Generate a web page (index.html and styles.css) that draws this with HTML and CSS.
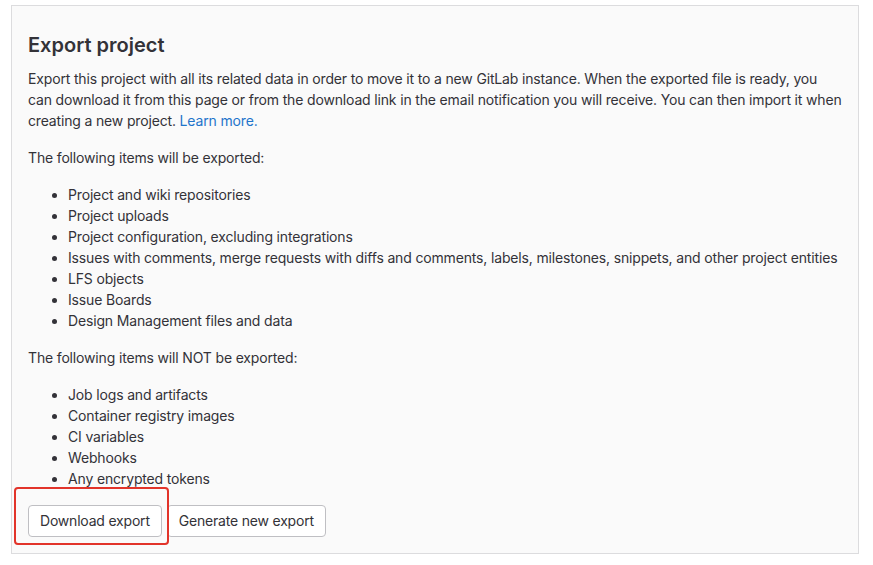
FILE: index.html
```html
<!DOCTYPE html>
<html lang="en">
<head>
<meta charset="utf-8">
<title>Export project</title>
<link rel="stylesheet" href="styles.css">
</head>
<body>
<div class="page">
  <section class="panel">
    <h4 class="title">Export project</h4>
    <p>Export this project with all its related data in order to move it to a new GitLab instance. When the exported file is ready, you can download it from this page or from the download link in the email notification you will receive. You can then import it when creating a new project. <a href="#" class="link">Learn more.</a></p>
    <p>The following items will be exported:</p>
    <ul>
      <li>Project and wiki repositories</li>
      <li>Project uploads</li>
      <li>Project configuration, excluding integrations</li>
      <li>Issues with comments, merge requests with diffs and comments, labels, milestones, snippets, and other project entities</li>
      <li>LFS objects</li>
      <li>Issue Boards</li>
      <li>Design Management files and data</li>
    </ul>
    <p>The following items will NOT be exported:</p>
    <ul>
      <li>Job logs and artifacts</li>
      <li>Container registry images</li>
      <li>CI variables</li>
      <li>Webhooks</li>
      <li>Any encrypted tokens</li>
    </ul>
    <div class="actions">
      <span class="highlight-wrap">
        <button class="btn">Download export</button>
        <span class="highlight"></span>
      </span>
      <button class="btn">Generate new export</button>
    </div>
  </section>
</div>
</body>
</html>
```
FILE: styles.css
```css
html, body {
  margin: 0;
  padding: 0;
  background: #ffffff;
}

body {
  font-family: Inter, "Noto Sans", "Liberation Sans", sans-serif;
  font-size: 14px;
  line-height: 21px;
  letter-spacing: -0.16px;
  color: #333238;
}

.page {
  padding: 5px 0 0 11px;
}

.panel {
  width: 848px;
  box-sizing: border-box;
  background: #fafafa;
  border: 1px solid #dcdcde;
  padding: 16px 16px 16px 16px;
}

.title {
  margin: 11px 0 11px 0;
  font-size: 20px;
  line-height: 24px;
  font-weight: 600;
  letter-spacing: 0;
  color: #333238;
}

p {
  margin: 0 0 16px 0;
}

ul {
  margin: 0 0 16px 0;
  padding-left: 40px;
}

.link {
  color: #1f75cb;
  text-decoration: none;
}

.actions {
  display: flex;
  gap: 5px;
}

.highlight-wrap {
  position: relative;
  display: inline-flex;
}

.btn {
  font-family: inherit;
  font-size: 14px;
  line-height: 16px;
  letter-spacing: -0.2px;
  color: #333238;
  background: #ffffff;
  border: 1px solid #bfbfc3;
  border-radius: 4px;
  height: 32px;
  padding: 0 11px;
  box-sizing: border-box;
}

.highlight {
  position: absolute;
  left: -14px;
  top: -18px;
  right: -7px;
  bottom: -8px;
  border: 2px solid #e2342a;
  border-radius: 4px;
  pointer-events: none;
}
```
